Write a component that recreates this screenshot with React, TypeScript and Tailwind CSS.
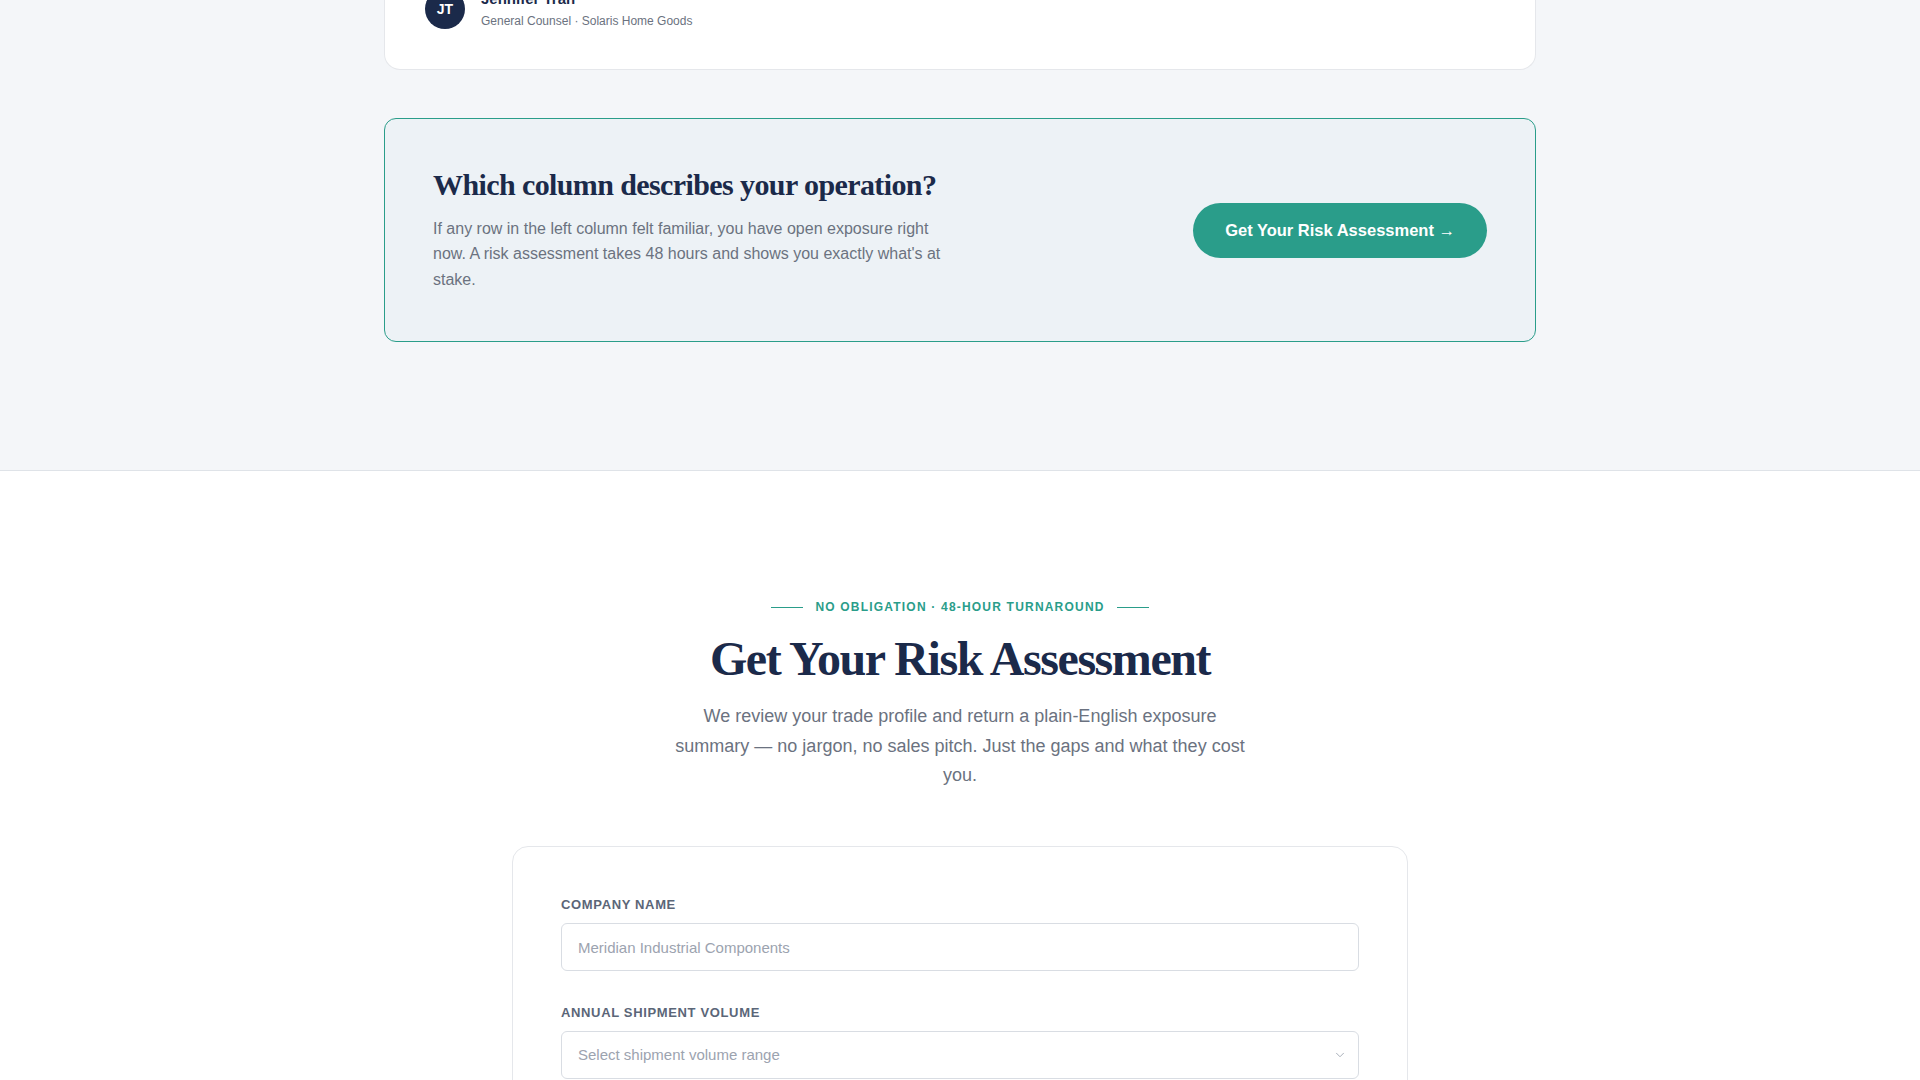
import { ChevronDown } from 'lucide-react'

const sans = { fontFamily: '"Liberation Sans", Arial, sans-serif' }

function AuthorRow() {
  return (
    <div className="flex items-center gap-4">
      <div className="flex h-10 w-10 shrink-0 items-center justify-center rounded-full bg-[#1b2a4a] text-sm font-bold text-white">
        JT
      </div>
      <div className="flex flex-col">
        <span className="text-[15px] font-bold leading-5 text-[#1b2a4a]">Jennifer Tran</span>
        <span className="mt-1 text-xs leading-4 text-[#6b7280]">General Counsel · Solaris Home Goods</span>
      </div>
    </div>
  )
}

function CtaBanner() {
  return (
    <div className="mt-12 flex items-center justify-between rounded-xl border border-[#2a9d8a] bg-[#edf2f6] px-12 pt-[47px] pb-[49px]">
      <div className="max-w-[520px]">
        <h3 className="font-['Liberation_Serif',serif] text-3xl font-bold leading-tight tracking-[-0.02em] text-[#1b2a4a]">
          Which column describes your operation?
        </h3>
        <p className="mt-3 text-base leading-[1.6] text-[#6b7280]">
          If any row in the left column felt familiar, you have open exposure right now. A risk assessment takes 48
          hours and shows you exactly what's at stake.
        </p>
      </div>
      <button className="mt-[2px] h-[55px] rounded-full bg-[#2a9d8a] px-8 text-[16.5px] font-bold text-white">
        Get Your Risk Assessment →
      </button>
    </div>
  )
}

function Field({ label, children }: { label: string; children: React.ReactNode }) {
  return (
    <div className="flex flex-col">
      <label className="mb-2 text-[13px] font-bold uppercase leading-5 tracking-wider text-[#5b6678]">{label}</label>
      {children}
    </div>
  )
}

export default function App() {
  return (
    <div className="min-h-screen bg-white text-[#1b2a4a]" style={sans}>
      <section className="bg-[#f4f6f9] pb-32">
        <div className="mx-auto max-w-6xl">
          <div className="-mt-[11px] rounded-b-2xl border border-t-0 border-[#e5e7eb] bg-white px-10 pb-10">
            <AuthorRow />
          </div>
          <CtaBanner />
        </div>
      </section>

      <section className="border-t border-[#dfe3e8] bg-white pt-32 pb-24">
        <div className="mx-auto flex max-w-6xl flex-col items-center text-center">
          <div className="mb-4 flex items-center gap-3">
            <span className="h-px w-8 bg-[#2a9d8a]" />
            <span className="text-xs font-bold uppercase leading-4 tracking-widest text-[#2a9d8a]">
              No obligation · 48-hour turnaround
            </span>
            <span className="h-px w-8 bg-[#2a9d8a]" />
          </div>
          <h2 className="font-['Liberation_Serif',serif] text-5xl font-bold leading-[1.15] tracking-[-0.03em] text-[#1b2a4a]">
            Get Your Risk Assessment
          </h2>
          <p className="mt-4 max-w-xl text-lg leading-[1.625] text-[#6b7280]">
            We review your trade profile and return a plain-English exposure summary — no jargon, no sales pitch. Just
            the gaps and what they cost you.
          </p>
        </div>

        <div className="mx-auto mt-14 max-w-4xl rounded-2xl border border-[#e5e7eb] bg-white p-12 text-left">
          <div className="flex flex-col gap-8">
            <Field label="Company Name">
              <input
                className="h-12 w-full rounded-md border border-[#d9dde3] bg-white px-4 text-[15px] text-[#1b2a4a] placeholder:text-[#9ca3af] outline-none"
                placeholder="Meridian Industrial Components"
              />
            </Field>
            <Field label="Annual Shipment Volume">
              <div className="relative">
                <select
                  className="h-12 w-full appearance-none rounded-md border border-[#d9dde3] bg-white px-4 text-[15px] text-[#9ca3af] outline-none"
                  defaultValue=""
                >
                  <option value="" disabled>
                    Select shipment volume range
                  </option>
                  <option>Under 100 shipments</option>
                  <option>100 – 500 shipments</option>
                  <option>500+ shipments</option>
                </select>
                <ChevronDown
                  className="pointer-events-none absolute right-3 top-1/2 h-3.5 w-3.5 -translate-y-1/2 text-[#9ca3af]"
                  strokeWidth={1.5}
                />
              </div>
            </Field>
          </div>
        </div>
      </section>
    </div>
  )
}
